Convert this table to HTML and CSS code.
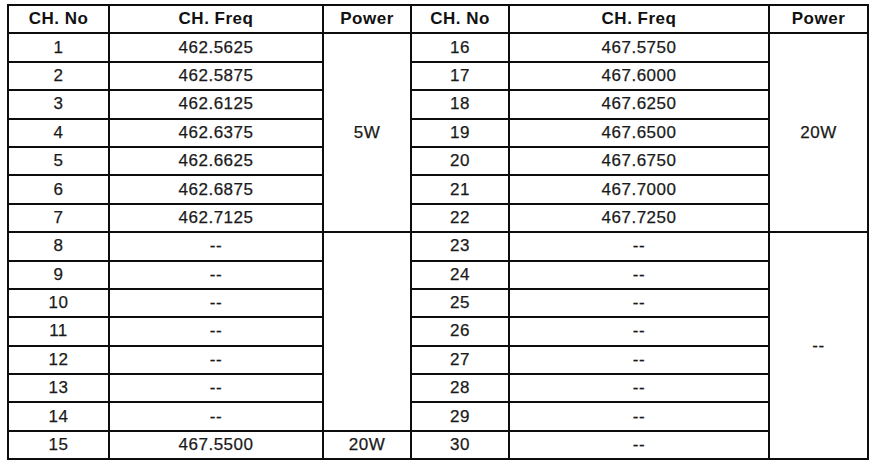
FILE: index.html
```html
<!DOCTYPE html>
<html>
<head>
<meta charset="utf-8">
<link rel="stylesheet" href="styles.css">
</head>
<body>
<table class="ch-table">
  <colgroup>
    <col class="c-no"><col class="c-freq"><col class="c-pow">
    <col class="c-no2"><col class="c-freq2"><col class="c-pow2">
  </colgroup>
  <thead>
    <tr><th>CH. No</th><th>CH. Freq</th><th>Power</th><th>CH. No</th><th>CH. Freq</th><th>Power</th></tr>
  </thead>
  <tbody>
    <tr><td>1</td><td>462.5625</td><td rowspan="7">5W</td><td>16</td><td>467.5750</td><td rowspan="7">20W</td></tr>
    <tr><td>2</td><td>462.5875</td><td>17</td><td>467.6000</td></tr>
    <tr><td>3</td><td>462.6125</td><td>18</td><td>467.6250</td></tr>
    <tr><td>4</td><td>462.6375</td><td>19</td><td>467.6500</td></tr>
    <tr><td>5</td><td>462.6625</td><td>20</td><td>467.6750</td></tr>
    <tr><td>6</td><td>462.6875</td><td>21</td><td>467.7000</td></tr>
    <tr><td>7</td><td>462.7125</td><td>22</td><td>467.7250</td></tr>
    <tr><td>8</td><td>--</td><td rowspan="7"></td><td>23</td><td>--</td><td rowspan="8">--</td></tr>
    <tr><td>9</td><td>--</td><td>24</td><td>--</td></tr>
    <tr><td>10</td><td>--</td><td>25</td><td>--</td></tr>
    <tr><td>11</td><td>--</td><td>26</td><td>--</td></tr>
    <tr><td>12</td><td>--</td><td>27</td><td>--</td></tr>
    <tr><td>13</td><td>--</td><td>28</td><td>--</td></tr>
    <tr><td>14</td><td>--</td><td>29</td><td>--</td></tr>
    <tr><td>15</td><td>467.5500</td><td>20W</td><td>30</td><td>--</td></tr>
  </tbody>
</table>
</body>
</html>
```
FILE: styles.css
```css
html, body {
  background: #ffffff;
}
body {
  margin: 4px 0 0 7px;
  font-family: "Liberation Sans", Arial, sans-serif;
  color: #1a1a1a;
}
.ch-table {
  border-collapse: collapse;
  table-layout: fixed;
  width: 861px;
  border: 2px solid #0d0d0d;
}
.c-no { width: 101px; }
.c-freq { width: 214px; }
.c-pow { width: 88px; }
.c-no2 { width: 98px; }
.c-freq2 { width: 260px; }
.c-pow2 { width: 99px; }
.ch-table th,
.ch-table td {
  border: 2px solid #0d0d0d;
  height: 26.4px;
  padding: 0;
  text-align: center;
  vertical-align: middle;
  font-size: 17px;
  letter-spacing: 0.5px;
  line-height: 20px;
  -webkit-text-stroke: 0.25px #1a1a1a;
}
.ch-table th {
  font-weight: bold;
  color: #111;
  -webkit-text-stroke: 0;
}
```
